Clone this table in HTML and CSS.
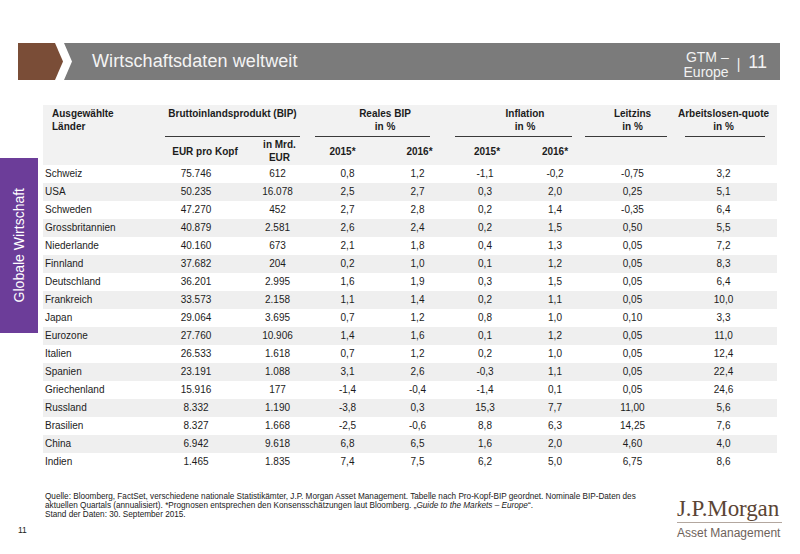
FILE: index.html
```html
<!DOCTYPE html>
<html lang="de">
<head>
<meta charset="utf-8">
<title>Wirtschaftsdaten weltweit</title>
<link rel="stylesheet" href="styles.css">
</head>
<body>
<div class="page">
  <header class="bar">
    <div class="bar-tab"></div>
    <div class="bar-main">
      <h1 class="title">Wirtschaftsdaten weltweit</h1>
      <div class="bar-right">
        <div class="gtm">GTM –<br>Europe</div>
        <span class="sep">|</span>
        <span class="pnum">11</span>
      </div>
    </div>
  </header>

  <div class="content">
    <div class="side-tab"><span class="side-text">Globale Wirtschaft</span></div>

    <div class="table">
      <div class="thead">
        <div class="h-country">Ausgewählte<br>Länder</div>
        <div class="h-group g-bip">Bruttoinlandsprodukt (BIP)</div>
        <div class="h-group g-real">Reales BIP<br>in %</div>
        <div class="h-group g-infl">Inflation<br>in %</div>
        <div class="h-group g-leit">Leitzins<br>in %</div>
        <div class="h-group g-arb">Arbeitslosen-quote<br>in %</div>

        <div class="rule r-bip"></div>
        <div class="rule r-real"></div>
        <div class="rule r-infl"></div>
        <div class="rule r-leit"></div>
        <div class="rule r-arb"></div>

        <div class="h-sub s1">EUR pro Kopf</div>
        <div class="h-sub s2">in Mrd.<br>EUR</div>
        <div class="h-sub s3">2015*</div>
        <div class="h-sub s4">2016*</div>
        <div class="h-sub s5">2015*</div>
        <div class="h-sub s6">2016*</div>
      </div>

      <div class="row"><span class="c0">Schweiz</span><span class="c1">75.746</span><span>612</span><span>0,8</span><span>1,2</span><span>-1,1</span><span>-0,2</span><span>-0,75</span><span>3,2</span></div>
      <div class="row"><span class="c0">USA</span><span class="c1">50.235</span><span>16.078</span><span>2,5</span><span>2,7</span><span>0,3</span><span>2,0</span><span>0,25</span><span>5,1</span></div>
      <div class="row"><span class="c0">Schweden</span><span class="c1">47.270</span><span>452</span><span>2,7</span><span>2,8</span><span>0,2</span><span>1,4</span><span>-0,35</span><span>6,4</span></div>
      <div class="row"><span class="c0">Grossbritannien</span><span class="c1">40.879</span><span>2.581</span><span>2,6</span><span>2,4</span><span>0,2</span><span>1,5</span><span>0,50</span><span>5,5</span></div>
      <div class="row"><span class="c0">Niederlande</span><span class="c1">40.160</span><span>673</span><span>2,1</span><span>1,8</span><span>0,4</span><span>1,3</span><span>0,05</span><span>7,2</span></div>
      <div class="row"><span class="c0">Finnland</span><span class="c1">37.682</span><span>204</span><span>0,2</span><span>1,0</span><span>0,1</span><span>1,2</span><span>0,05</span><span>8,3</span></div>
      <div class="row"><span class="c0">Deutschland</span><span class="c1">36.201</span><span>2.995</span><span>1,6</span><span>1,9</span><span>0,3</span><span>1,5</span><span>0,05</span><span>6,4</span></div>
      <div class="row"><span class="c0">Frankreich</span><span class="c1">33.573</span><span>2.158</span><span>1,1</span><span>1,4</span><span>0,2</span><span>1,1</span><span>0,05</span><span>10,0</span></div>
      <div class="row"><span class="c0">Japan</span><span class="c1">29.064</span><span>3.695</span><span>0,7</span><span>1,2</span><span>0,8</span><span>1,0</span><span>0,10</span><span>3,3</span></div>
      <div class="row"><span class="c0">Eurozone</span><span class="c1">27.760</span><span>10.906</span><span>1,4</span><span>1,6</span><span>0,1</span><span>1,2</span><span>0,05</span><span>11,0</span></div>
      <div class="row"><span class="c0">Italien</span><span class="c1">26.533</span><span>1.618</span><span>0,7</span><span>1,2</span><span>0,2</span><span>1,0</span><span>0,05</span><span>12,4</span></div>
      <div class="row"><span class="c0">Spanien</span><span class="c1">23.191</span><span>1.088</span><span>3,1</span><span>2,6</span><span>-0,3</span><span>1,1</span><span>0,05</span><span>22,4</span></div>
      <div class="row"><span class="c0">Griechenland</span><span class="c1">15.916</span><span>177</span><span>-1,4</span><span>-0,4</span><span>-1,4</span><span>0,1</span><span>0,05</span><span>24,6</span></div>
      <div class="row"><span class="c0">Russland</span><span class="c1">8.332</span><span>1.190</span><span>-3,8</span><span>0,3</span><span>15,3</span><span>7,7</span><span>11,00</span><span>5,6</span></div>
      <div class="row"><span class="c0">Brasilien</span><span class="c1">8.327</span><span>1.668</span><span>-2,5</span><span>-0,6</span><span>8,8</span><span>6,3</span><span>14,25</span><span>7,6</span></div>
      <div class="row"><span class="c0">China</span><span class="c1">6.942</span><span>9.618</span><span>6,8</span><span>6,5</span><span>1,6</span><span>2,0</span><span>4,60</span><span>4,0</span></div>
      <div class="row"><span class="c0">Indien</span><span class="c1">1.465</span><span>1.835</span><span>7,4</span><span>7,5</span><span>6,2</span><span>5,0</span><span>6,75</span><span>8,6</span></div>
    </div>
  </div>

  <footer class="footer">
    <div class="foot-left">
      <p class="notes">Quelle: Bloomberg, FactSet, verschiedene nationale Statistikämter, J.P. Morgan Asset Management. Tabelle nach Pro-Kopf-BIP geordnet. Nominale BIP-Daten des<br>aktuellen Quartals (annualisiert). *Prognosen entsprechen den Konsensschätzungen laut Bloomberg. „<em>Guide to the Markets – Europe</em>“.<br>Stand der Daten: 30. September 2015.</p>
      <div class="page-num">11</div>
    </div>
    <div class="logo">
      <div class="logo-name">J.P.Morgan</div>
      <div class="logo-rule"></div>
      <div class="logo-sub">Asset Management</div>
    </div>
  </footer>
</div>
</body>
</html>
```

FILE: styles.css
```css
html, body {
  margin: 0;
  padding: 0;
  background: #ffffff;
}

.page {
  width: 800px;
  height: 554px;
  box-sizing: border-box;
  padding-top: 43px;
  overflow: hidden;
  font-family: "Liberation Sans", Arial, sans-serif;
  color: #1c1c1c;
}

/* ---------- top bar ---------- */
.bar {
  display: flex;
  height: 37px;
  width: 762px;
  margin-left: 18px;
}

.bar-tab {
  flex: none;
  width: 45px;
  background: #7a4d37;
  clip-path: polygon(0 0, 37px 0, 45px 50%, 37px 100%, 0 100%);
}

.bar-main {
  flex: 1;
  margin-left: 1px;
  background: #7b7b7b;
  clip-path: polygon(0 0, 100% 0, 100% 100%, 0 100%, 8px 50%);
  display: flex;
  align-items: center;
  justify-content: space-between;
  padding: 0 13px 0 28px;
}

.title {
  margin: 0;
  font-size: 18px;
  font-weight: normal;
  color: #f4f4f4;
  letter-spacing: 0.1px;
}

.bar-right {
  display: flex;
  align-items: center;
  color: #f2f2f2;
}

.gtm {
  font-size: 14px;
  line-height: 15px;
  text-align: right;
  margin-top: 6px;
}

.sep {
  font-size: 14px;
  margin: 4px 8px 0 8px;
}

.pnum {
  font-size: 18px;
  margin-top: 2px;
}

/* ---------- content ---------- */
.content {
  display: flex;
  align-items: flex-start;
  margin-top: 25px;
}

.side-tab {
  flex: none;
  width: 38px;
  height: 175px;
  margin-top: 53px;
  background: #6c3d99;
  display: flex;
  align-items: center;
  justify-content: center;
}

.side-text {
  writing-mode: vertical-rl;
  transform: rotate(180deg);
  color: #ffffff;
  font-size: 14px;
  white-space: nowrap;
}

.table {
  width: 734px;
  margin-left: 5px;
  font-size: 10px;
}

.thead,
.row {
  display: grid;
  grid-template-columns: 117px 80px 75px 65px 75px 60px 80px 75px 107px;
}

.thead {
  background: #f2f2f2;
  grid-template-rows: 31px 1px 28px;
  font-weight: bold;
  line-height: 13px;
}

.h-country {
  grid-column: 1;
  grid-row: 1;
  padding: 2px 0 0 9px;
}

.h-group {
  grid-row: 1;
  text-align: center;
  padding-top: 2px;
}

.g-bip  { grid-column: 2 / 4; padding-left: 5px; padding-right: 15px; }
.g-real { grid-column: 4 / 6; }
.g-infl { grid-column: 6 / 8; }
.g-leit { grid-column: 8; }
.g-arb  { grid-column: 9; }

.rule {
  grid-row: 2;
  background: #3a3a3a;
}

.r-bip  { grid-column: 2 / 4; margin: 0 15px 0 5px; }
.r-real { grid-column: 4 / 6; margin: 0 25px 0 0; }
.r-infl { grid-column: 6 / 8; margin: 0 23px 0 0; }
.r-leit { grid-column: 8; margin: 0 3px 0 -10px; }
.r-arb  { grid-column: 9; margin: 0 12px 0 15px; }

.h-sub {
  grid-row: 3;
  display: flex;
  align-items: center;
  justify-content: center;
  text-align: center;
}

.s1 { grid-column: 2; padding-left: 10px; }
.s2 { grid-column: 3; padding-left: 4px; }
.s3 { grid-column: 4; padding-right: 10px; }
.s4 { grid-column: 5; padding-left: 4px; }
.s5 { grid-column: 6; padding-left: 4px; }
.s6 { grid-column: 7; }

.row {
  height: 18px;
  line-height: 18px;
  text-align: center;
}

.row:nth-of-type(odd) {
  background: #efefef;
}

.row:nth-of-type(even) {
  background: #ffffff;
}

.row .c0 {
  text-align: left;
  padding-left: 2px;
}

.row .c1 {
  padding-right: 8px;
}

/* ---------- footer ---------- */
.footer {
  display: flex;
  justify-content: space-between;
  margin-top: 21px;
}

.foot-left {
  padding-left: 18px;
}

.notes {
  margin: 0 0 0 27px;
  font-size: 8.2px;
  line-height: 9px;
  color: #1a1a1a;
  white-space: nowrap;
}

.page-num {
  margin-top: 6px;
  font-size: 8.5px;
  line-height: 10px;
  color: #222;
}

.logo {
  margin: 6px 18px 0 0;
  width: 105px;
  display: flex;
  flex-direction: column;
}

.logo-name {
  font-family: "Liberation Serif", "Times New Roman", serif;
  font-size: 23px;
  line-height: 22px;
  color: #5b4535;
  letter-spacing: -0.1px;
  white-space: nowrap;
}

.logo-rule {
  height: 1px;
  margin-top: 2px;
  background: #b3a79f;
}

.logo-sub {
  margin-top: 3px;
  font-size: 12px;
  line-height: 14px;
  color: #6e625a;
  white-space: nowrap;
}
```
